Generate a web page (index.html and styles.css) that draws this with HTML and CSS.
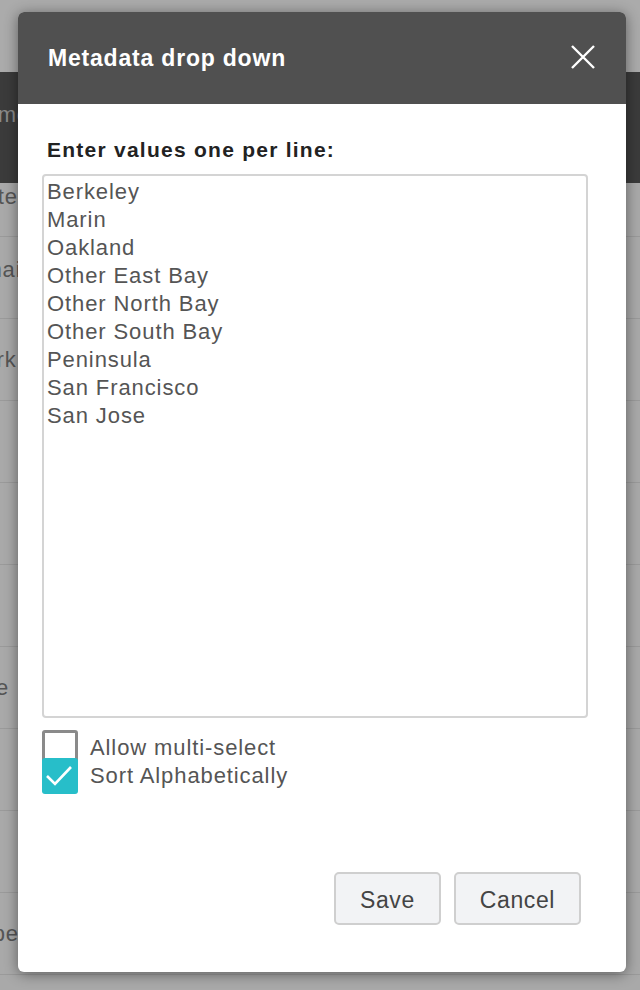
FILE: index.html
```html
<!DOCTYPE html>
<html lang="en">
<head>
    <meta charset="UTF-8">
    <title>Metadata drop down</title>
    <link rel="stylesheet" href="styles.css">
</head>
<body>
    <div class="page">
        <div class="page-top"></div>
        <div class="page-bar"><span class="cell">Name</span></div>
        <div class="rows">
            <div class="row row-first"><span class="cell">Date</span></div>
            <div class="row row-second"><span class="cell">Email</span></div>
            <div class="row"><span class="cell">Park</span></div>
            <div class="row"></div>
            <div class="row"></div>
            <div class="row"></div>
            <div class="row"><span class="cell">Site</span></div>
            <div class="row"></div>
            <div class="row"></div>
            <div class="row"><span class="cell">Type</span></div>
            <div class="row row-last"></div>
        </div>
    </div>

    <div class="modal">
        <div class="modal-header">
            <h2 class="modal-title">Metadata drop down</h2>
            <button type="button" class="close-btn" aria-label="Close">
                <svg width="24" height="24" viewBox="0 0 24 24">
                    <path d="M1 1 L23 23 M23 1 L1 23" stroke="#fff" stroke-width="2.4" fill="none"/>
                </svg>
            </button>
        </div>

        <div class="modal-body">
            <label for="values" class="field-label">Enter values one per line:</label>
            <textarea id="values" class="values">Berkeley
Marin
Oakland
Other East Bay
Other North Bay
Other South Bay
Peninsula
San Francisco
San Jose</textarea>

            <div class="options">
                <label class="option">
                    <span class="box"></span>
                    <span>Allow multi-select</span>
                </label>
                <label class="option">
                    <span class="box checked">
                        <svg width="36" height="36" viewBox="0 0 36 36">
                            <path d="M5 18 L13 26 L29 9" stroke="#fff" stroke-width="2.6" fill="none"/>
                        </svg>
                    </span>
                    <span>Sort Alphabetically</span>
                </label>
            </div>
        </div>

        <div class="modal-footer">
            <button type="button" class="btn">Save</button>
            <button type="button" class="btn">Cancel</button>
        </div>
    </div>
</body>
</html>
```

FILE: styles.css
```css
body {
    margin: 0;
    padding: 0;
    background: #a9a9a9;
    font-family: "Liberation Sans", Arial, sans-serif;
    overflow: hidden;
}

.page {
    width: 640px;
    height: 990px;
    overflow: hidden;
}

.page-top {
    height: 72px;
    background: #ababab;
}

.page-bar {
    height: 111px;
    box-sizing: border-box;
    padding-top: 31px;
    background: #3b3b3b;
    display: flex;
    align-items: flex-start;
    color: #8a8a8a;
}

.row {
    box-sizing: border-box;
    height: 82px;
    border-bottom: 1px solid #9a9a9a;
    display: flex;
    align-items: center;
    color: #555;
}

.row-first {
    height: 54px;
    align-items: flex-start;
    padding-top: 2px;
}

.row-second {
    align-items: flex-start;
    padding-top: 21px;
}

.row-last {
    height: 15px;
    border-bottom: none;
}

.cell {
    font-size: 22px;
    line-height: 24px;
    letter-spacing: 0.8px;
    margin-left: -32px;
}

/* modal */
.modal {
    position: absolute;
    left: 18px;
    top: 12px;
    width: 608px;
    height: 960px;
    background: #fff;
    border-radius: 6px;
    overflow: hidden;
    display: flex;
    flex-direction: column;
    box-shadow: 0 2px 14px rgba(0, 0, 0, 0.45);
}

.modal-header {
    height: 92px;
    flex-shrink: 0;
    background: #505050;
    display: flex;
    align-items: center;
    justify-content: space-between;
    padding: 0 31px 0 30px;
}

.modal-title {
    margin: 0;
    color: #fff;
    font-size: 23px;
    letter-spacing: 0.8px;
    font-weight: bold;
}

.close-btn {
    background: none;
    border: none;
    padding: 0;
    width: 24px;
    height: 24px;
    cursor: pointer;
    margin-top: -2px;
}

.close-btn svg {
    display: block;
}

.modal-body {
    padding: 34px 38px 0 24px;
}

.field-label {
    display: block;
    margin-left: 5px;
    font-size: 21px;
    line-height: 24px;
    letter-spacing: 1.25px;
    font-weight: bold;
    color: #222;
}

.values {
    display: block;
    box-sizing: border-box;
    width: 546px;
    height: 544px;
    margin-top: 12px;
    padding: 2px 3px;
    border: 2px solid #d4d4d4;
    border-radius: 4px;
    font-family: "Liberation Sans", Arial, sans-serif;
    font-size: 22px;
    line-height: 28px;
    letter-spacing: 0.9px;
    color: #555;
    resize: none;
    outline: none;
}

.options {
    margin-top: 16px;
}

.option {
    display: flex;
    align-items: center;
    height: 28px;
    font-size: 22px;
    letter-spacing: 0.9px;
    color: #555;
}

.box {
    flex-shrink: 0;
    box-sizing: border-box;
    width: 36px;
    height: 36px;
    margin-right: 12px;
    border: 3px solid #8a8a8a;
    border-radius: 3px;
    background: #fff;
}

.box.checked {
    border: none;
    background: #27bec9;
}

.box svg {
    display: block;
}

.modal-footer {
    margin-top: auto;
    display: flex;
    justify-content: flex-end;
    gap: 13px;
    padding: 0 45px 47px 0;
}

.btn {
    height: 53px;
    padding: 4px 24px 0;
    background: #f2f3f5;
    border: 2px solid #cfcfcf;
    border-radius: 5px;
    font-family: "Liberation Sans", Arial, sans-serif;
    font-size: 23px;
    letter-spacing: 0.6px;
    color: #444;
    cursor: pointer;
}
```
